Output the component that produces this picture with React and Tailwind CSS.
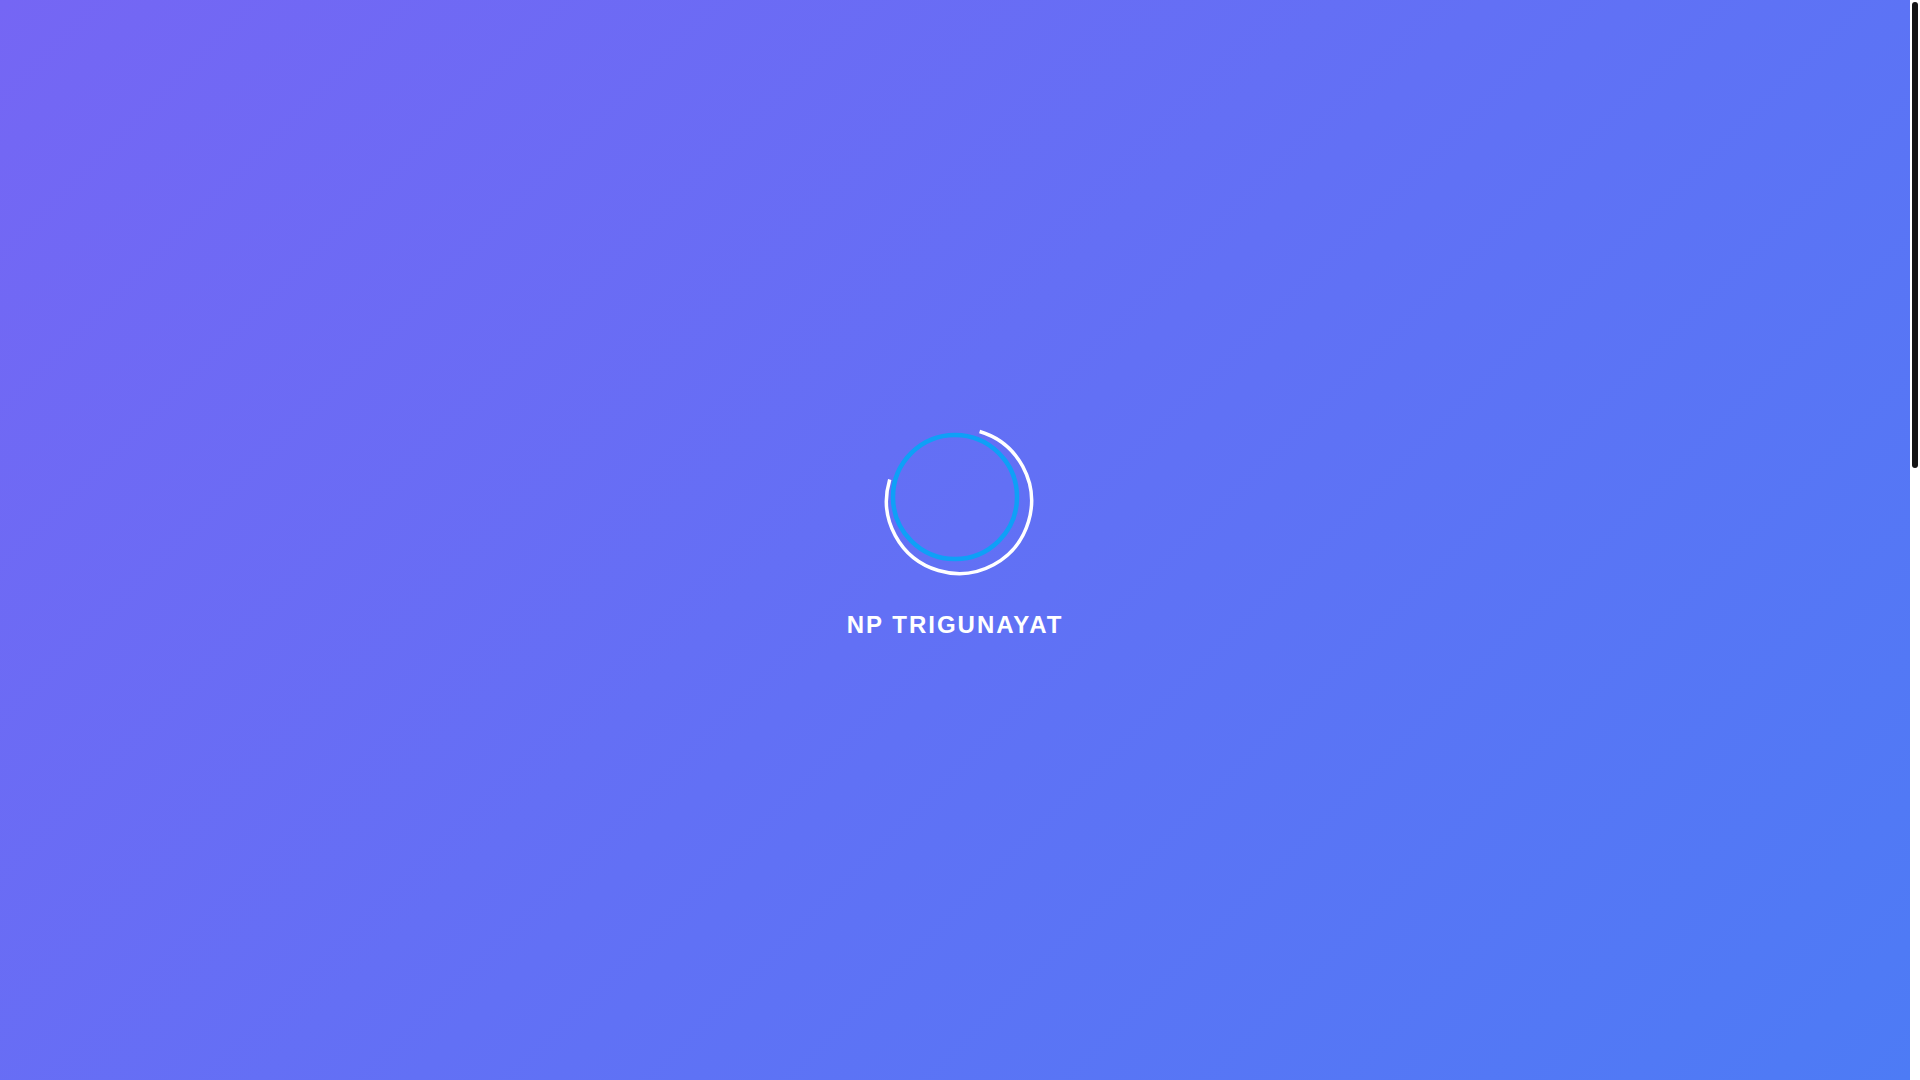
export default function App() {
    return (
        <div className="h-screen flex overflow-hidden bg-white">
            {/* Loader screen */}
            <div className="flex-1 flex flex-col items-center justify-center pb-[21px] bg-[linear-gradient(135deg,#7566f4_0%,#6270f5_50%,#4d7bf5_100%)]">
                <svg width="160" height="160" viewBox="0 0 160 160" className="block">
                    <circle cx="80" cy="80" r="62" fill="none" stroke="#0ea0f7" strokeWidth="4.5" />
                    <circle
                        cx="84"
                        cy="84"
                        r="72.5"
                        fill="none"
                        stroke="#ffffff"
                        strokeWidth="3.5"
                        strokeDasharray="342 114"
                        transform="rotate(-73.5 84 84)"
                    />
                </svg>
                <p className="mt-[30px] text-white font-bold text-[24px] tracking-[2px] font-['Liberation_Sans',Arial,sans-serif]">
                    NP TRIGUNAYAT
                </p>
            </div>
            {/* Page scrollbar */}
            <div className="w-[10px] shrink-0 bg-white px-[2px] pt-[2px]">
                <div className="h-[466px] rounded-full bg-[#141414]"></div>
            </div>
        </div>
    );
}
